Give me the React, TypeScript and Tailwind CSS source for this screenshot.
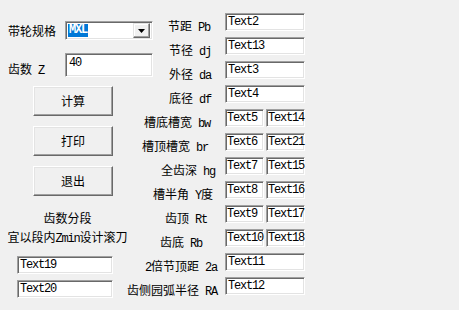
import React from "react";

const mono = "font-['Liberation_Mono',monospace] text-[12px] tracking-[-1.2px]";

function Mixed({ text }: { text: string }) {
  const parts = text.match(/[\x00-\x7f]+|[^\x00-\x7f]+/g) || [];
  return (
    <>
      {parts.map((p, i) =>
        /[\x00-\x7f]/.test(p[0]) ? (
          <span key={i} className={`${mono} whitespace-pre`}>{p}</span>
        ) : (
          <span key={i}>{p}</span>
        )
      )}
    </>
  );
}

function Box({ text, className = "" }: { text: string; className?: string }) {
  return (
    <div
      className={`bg-white border border-t-[#a0a0a0] border-l-[#a0a0a0] border-r-white border-b-white shadow-[inset_1px_1px_0_#696969,inset_-1px_-1px_0_#e3e3e3] pl-[2px] leading-[16px] whitespace-nowrap ${mono} ${className}`}
    >
      {text}
    </div>
  );
}

function Btn({ label }: { label: string }) {
  return (
    <button className="w-[80px] h-[30px] flex items-center justify-center bg-[#f0f0f0] border border-t-white border-l-white border-r-[#696969] border-b-[#696969] shadow-[inset_-1px_-1px_0_#a0a0a0,inset_1px_1px_0_#e3e3e3] text-[12px]">
      {label}
    </button>
  );
}

function Combo() {
  return (
    <div className="w-[88px] h-[19px] bg-white border border-t-[#a0a0a0] border-l-[#a0a0a0] border-r-white border-b-white shadow-[inset_1px_1px_0_#696969,inset_-1px_-1px_0_#e3e3e3] flex items-center pl-[2px] pr-[2px]">
      <span className={`bg-[#0078d7] text-white font-bold px-[1px] leading-[13px] ${mono}`}>MXL</span>
      <div className="ml-auto w-[17px] h-[15px] bg-[#f0f0f0] border border-t-[#e3e3e3] border-l-[#e3e3e3] border-r-[#696969] border-b-[#696969] shadow-[inset_-1px_-1px_0_#a0a0a0,inset_1px_1px_0_#fff] flex items-center justify-center">
        <svg width="7" height="4" viewBox="0 0 7 4">
          <path d="M0 0h7L3.5 4z" fill="#000" />
        </svg>
      </div>
    </div>
  );
}

const rows = [
  { label: "节距 Pb", boxes: ["Text2"], pr: "pr-[7px]" },
  { label: "节径 dj", boxes: ["Text13"], pr: "pr-[6px]" },
  { label: "外径 da", boxes: ["Text3"], pr: "pr-[6px]" },
  { label: "底径 df", boxes: ["Text4"], pr: "pr-[6px]" },
  { label: "槽底槽宽 bw", boxes: ["Text5", "Text14"], pr: "pr-[7px]" },
  { label: "槽顶槽宽 br", boxes: ["Text6", "Text21"], pr: "pr-[9px]" },
  { label: "全齿深 hg", boxes: ["Text7", "Text15"], pr: "pr-[2px]" },
  { label: "槽半角 Y度", boxes: ["Text8", "Text16"], pr: "pr-[4px]" },
  { label: "齿顶 Rt", boxes: ["Text9", "Text17"], pr: "pr-[10px]" },
  { label: "齿底 Rb", boxes: ["Text10", "Text18"], pr: "pr-[15px]" },
  { label: "2倍节顶距 2a", boxes: ["Text11"], pr: "pr-0" },
  { label: "齿侧园弧半径 RA", boxes: ["Text12"], pr: "pr-0" },
];

export default function App() {
  return (
    <div className="w-full min-h-screen bg-[#f0f0f0] flex font-['Noto_Sans_CJK_SC',sans-serif] text-[12px] text-black">
      {/* left column */}
      <div className="w-[160px] shrink-0 flex flex-col">
        <div className="flex items-center mt-[21px] h-[19px]">
          <span className="ml-[8px] w-[57px] leading-none">带轮规格</span>
          <Combo />
        </div>
        <div className="flex items-center mt-[13px] h-[24px]">
          <span className="ml-[8px] w-[57px] mt-[10px] leading-none">
            <Mixed text="齿数 Z" />
          </span>
          <Box text="40" className="w-[88px] h-[24px] pt-[1px] !pl-[3px]" />
        </div>
        <div className="ml-[33px] mt-[9px] flex flex-col gap-[10px]">
          <Btn label="计算" />
          <Btn label="打印" />
          <Btn label="退出" />
        </div>
        <div className="mt-[12px] w-[135px] text-center leading-[19px] whitespace-nowrap">
          <div>齿数分段</div>
          <div>
            <Mixed text="宜以段内Zmin设计滚刀" />
          </div>
        </div>
        <div className="ml-[17px] mt-[7px] flex flex-col gap-[6px]">
          <Box text="Text19" className="w-[96px] h-[18px]" />
          <Box text="Text20" className="w-[96px] h-[18px]" />
        </div>
      </div>

      {/* right column */}
      <div className="flex flex-col pt-[10px]">
        {rows.map((r) => (
          <div key={r.label} className="flex items-center h-[24px]">
            <div className={`w-[57px] flex justify-end whitespace-nowrap ${r.pr}`}>
              <span className="mt-[10px] leading-none">
                <Mixed text={r.label} />
              </span>
            </div>
            <div className="ml-[8px] flex gap-[2px]">
              {r.boxes.length === 1 ? (
                <Box text={r.boxes[0]} className="w-[80px] h-[18px]" />
              ) : (
                r.boxes.map((b) => (
                  <Box key={b} text={b} className="w-[39px] h-[18px] !pl-[1px]" />
                ))
              )}
            </div>
          </div>
        ))}
      </div>
    </div>
  );
}
